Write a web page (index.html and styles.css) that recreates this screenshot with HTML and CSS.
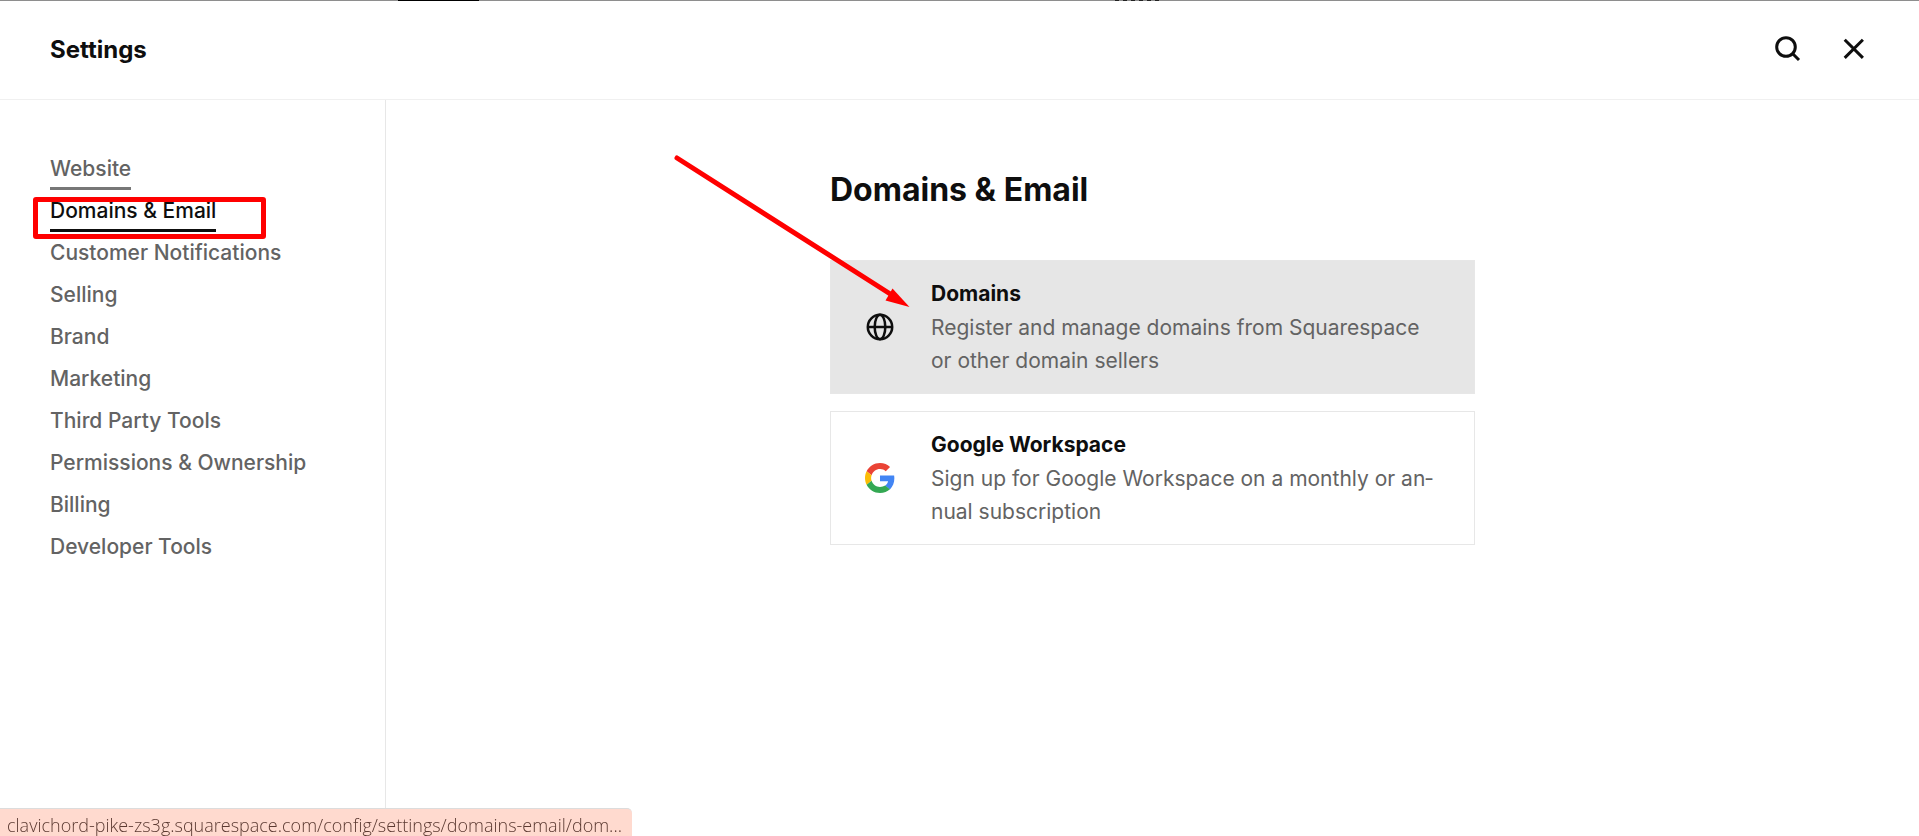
FILE: index.html
```html
<!DOCTYPE html>
<html lang="en">
<head>
  <meta charset="UTF-8" />
  <meta name="viewport" content="width=device-width, initial-scale=1" />
  <title>Settings</title>
  <link rel="stylesheet" href="styles.css">
</head>
<body>
  <div class="top-strip"></div>
  <header class="app-header">
    <h1>Settings</h1>
    <div class="header-actions">
      <button type="button" aria-label="Search">
        <svg class="icon" viewBox="0 0 30 30">
          <circle cx="13" cy="13" r="9.3" />
          <path d="M19.5 19.5L26 26" />
        </svg>
      </button>
      <button type="button" aria-label="Close">
        <svg class="icon" viewBox="0 0 30 30">
          <path d="M5.7 5.7l18.2 18.2M23.9 5.7L5.7 23.9" />
        </svg>
      </button>
    </div>
  </header>

  <div class="layout">
    <nav class="sidebar">
      <ul>
        <li><a class="hovered" href="#">Website</a></li>
        <li class="marked"><a class="active" href="#">Domains &amp; Email</a></li>
        <li><a href="#">Customer Notifications</a></li>
        <li><a href="#">Selling</a></li>
        <li><a href="#">Brand</a></li>
        <li><a href="#">Marketing</a></li>
        <li><a href="#">Third Party Tools</a></li>
        <li><a href="#">Permissions &amp; Ownership</a></li>
        <li><a href="#">Billing</a></li>
        <li><a href="#">Developer Tools</a></li>
      </ul>
    </nav>

    <main>
      <div class="content">
        <h2>Domains &amp; Email</h2>
        <a class="card selected" href="#">
          <svg class="globe" viewBox="0 0 30 30">
            <circle cx="15" cy="15" r="12.2" />
            <ellipse cx="15" cy="15" rx="5.3" ry="12.2" />
            <path d="M2.8 15h24.4" />
          </svg>
          <span class="card-text">
            <strong>Domains</strong>
            <span>Register and manage domains from Squarespace or other domain sellers</span>
          </span>
        </a>
        <a class="card" href="#">
          <svg class="google" viewBox="0 0 48 48">
            <path fill="#ea4335" d="M24 9.500c3.540 0 6.710 1.220 9.210 3.600l6.850-6.850C35.900 2.380 30.470 0 24 0 14.620 0 6.510 5.380 2.560 13.220l7.980 6.190C12.430 13.720 17.740 9.500 24 9.500z" />
            <path fill="#4285f4" d="M46.980 24.550c0-1.570-.15-3.090-.38-4.550H24v9.020h12.940c-.58 2.960-2.260 5.480-4.780 7.180l7.730 6c4.510-4.180 7.090-10.360 7.090-17.650z" />
            <path fill="#fbbc05" d="M10.530 28.590c-.48-1.450-.76-2.990-.76-4.590s.27-3.140.76-4.590l-7.980-6.190C.92 16.460 0 20.120 0 24c0 3.880.92 7.540 2.560 10.780l7.970-6.190z" />
            <path fill="#34a853" d="M24 48c6.480 0 11.930-2.130 15.890-5.810l-7.730-6c-2.150 1.450-4.920 2.300-8.160 2.300-6.260 0-11.570-4.220-13.470-9.910l-7.980 6.190C6.510 42.620 14.620 48 24 48z" />
          </svg>
          <span class="card-text">
            <strong>Google Workspace</strong>
            <span>Sign up for Google Workspace on a monthly or an&shy;nual subscription</span>
          </span>
        </a>
        <svg class="arrow" viewBox="0 0 240 156">
          <path class="shaft" d="M4 4L222 143" />
          <path class="head" d="M219.500 134.500L236.500 153L212.500 146.500z" />
        </svg>
      </div>
    </main>
  </div>

  <div class="status-bar">clavichord-pike-zs3g.squarespace.com/config/settings/domains-email/dom...</div>
</body>
</html>
```
FILE: styles.css
```css
:root {
  --text: #0e0e0e;
  --text-secondary: #636363;
  --border: #e7e7e7;
  --mark: #ff0000;
}

*,
*::after {
  margin: 0;
  padding: 0;
  box-sizing: border-box;
}

body {
  min-height: 100vh;
  display: flex;
  flex-direction: column;
  font-family: Inter, "Liberation Sans", sans-serif;
  font-size: 21px;
  background: #ffffff;
  color: var(--text);
}

a {
  color: inherit;
  text-decoration: none;
}

/* Edge of the page behind the panel */
.top-strip {
  height: 1px;
  background:
    linear-gradient(#000, #000) 398px 0 / 81px 1px no-repeat,
    repeating-linear-gradient(90deg, #222 0 4px, #8e8e8e 4px 8px) 1115px 0 / 48px 1px no-repeat,
    #8e8e8e;
}

.app-header {
  display: flex;
  align-items: center;
  justify-content: space-between;
  height: 99px;
  padding: 0 50px 2px 50px;
  border-bottom: 1px solid #f0f0f0;
}

.app-header h1 {
  font-size: 24px;
  font-weight: 700;
}

.header-actions {
  display: flex;
  gap: 36px;
}

.header-actions button {
  display: flex;
  border: none;
  background: none;
  cursor: pointer;
}

.icon {
  width: 30px;
  height: 30px;
  fill: none;
  stroke: var(--text);
  stroke-width: 3;
}

.layout {
  flex: 1;
  display: flex;
}

.sidebar {
  width: 386px;
  padding: 54px 0 0 50px;
  border-right: 1px solid var(--border);
}

.sidebar ul {
  list-style: none;
}

.sidebar li {
  position: relative;
  height: 42px;
}

.sidebar a {
  display: inline-block;
  height: 36px;
  line-height: 30px;
  font-weight: 500;
  color: var(--text-secondary);
}

.sidebar .hovered {
  border-bottom: 3px solid #777777;
}

.sidebar .active {
  color: var(--text);
  border-bottom: 3px solid var(--text);
}

/* Highlight frame over the current section */
.marked::after {
  content: "";
  position: absolute;
  top: 1px;
  left: -17px;
  width: 233px;
  height: 42px;
  border: 5px solid var(--mark);
  border-radius: 3px;
}

main {
  flex: 1;
  display: flex;
  justify-content: center;
  padding: 70px 24px 24px;
}

.content {
  position: relative;
  width: 645px;
}

.content h2 {
  margin-bottom: 50px;
  font-size: 32px;
  line-height: 40px;
  font-weight: 700;
}

.card {
  display: flex;
  align-items: center;
  gap: 36px;
  margin-bottom: 17px;
  padding: 16px 34px;
  border: 1px solid var(--border);
}

.card.selected {
  background: #e6e6e6;
}

.card svg {
  flex: none;
  width: 30px;
  height: 30px;
}

.globe {
  fill: none;
  stroke: var(--text);
  stroke-width: 2.500;
}

.card-text {
  flex: 1;
  display: flex;
  flex-direction: column;
  font-size: 21px;
  line-height: 33px;
  color: var(--text-secondary);
}

.card-text strong {
  line-height: 34px;
  font-weight: 700;
  color: var(--text);
}

.arrow {
  position: absolute;
  top: -16px;
  left: -157px;
  width: 240px;
  height: 156px;
  pointer-events: none;
}

.arrow .shaft {
  stroke: var(--mark);
  stroke-width: 5;
  stroke-linecap: round;
}

.arrow .head {
  fill: var(--mark);
}

/* Link preview in the window corner */
.status-bar {
  position: fixed;
  left: 0;
  bottom: 0;
  height: 28px;
  padding: 0 10px 0 7px;
  border-top: 1px solid #dcdcdc;
  border-radius: 0 5px 0 0;
  background: #ffdacf;
  color: #5c3a32;
  font-family: "Open Sans", "Noto Sans", sans-serif;
  font-size: 18px;
  font-weight: 300;
  line-height: 32px;
}
```
